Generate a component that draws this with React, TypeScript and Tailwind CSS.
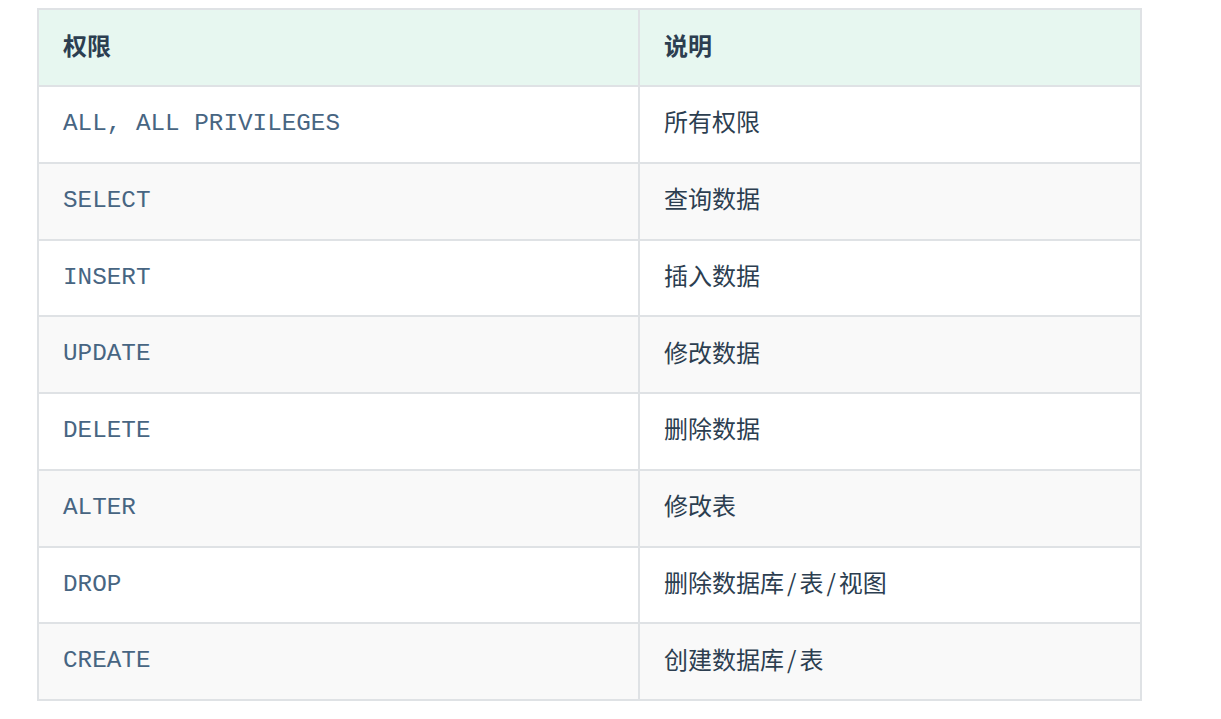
const rows: [string, string][] = [
  ['ALL, ALL PRIVILEGES', '所有权限'],
  ['SELECT', '查询数据'],
  ['INSERT', '插入数据'],
  ['UPDATE', '修改数据'],
  ['DELETE', '删除数据'],
  ['ALTER', '修改表'],
  ['DROP', '删除数据库/表/视图'],
  ['CREATE', '创建数据库/表'],
];

// slashes in the reference sit a little wider than Noto's
function Desc({ text }: { text: string }) {
  const parts = text.split('/');
  return (
    <>
      {parts.map((p, i) => (
        <span key={i}>
          {i > 0 && <span className="mx-[3px]">/</span>}
          {p}
        </span>
      ))}
    </>
  );
}

export default function App() {
  return (
    <div className="min-h-screen bg-white pt-2 pl-[37px] font-['Noto_Sans_CJK_SC',sans-serif] text-[#2c3e50]">
      <table className="w-[1105px] table-fixed border-collapse text-[24px]">
        <thead>
          <tr className="bg-[#e7f7f0]">
            <th className="h-[77px] w-[601px] border-2 border-[#dfe2e5] px-6 pb-[6px] text-left font-bold">权限</th>
            <th className="h-[77px] border-2 border-[#dfe2e5] px-6 pb-[6px] text-left font-bold">说明</th>
          </tr>
        </thead>
        <tbody>
          {rows.map(([perm, desc], i) => (
            <tr key={perm} className={i % 2 === 1 ? 'bg-[#f9f9f9]' : 'bg-white'}>
              <td className="h-[76.75px] border-2 border-[#dfe2e5] px-6 font-['Liberation_Mono',monospace] text-[24.3px] text-[#476582]">
                {perm}
              </td>
              <td className="h-[76.75px] border-2 border-[#dfe2e5] px-6 pb-[6px]">
                <Desc text={desc} />
              </td>
            </tr>
          ))}
        </tbody>
      </table>
    </div>
  );
}
